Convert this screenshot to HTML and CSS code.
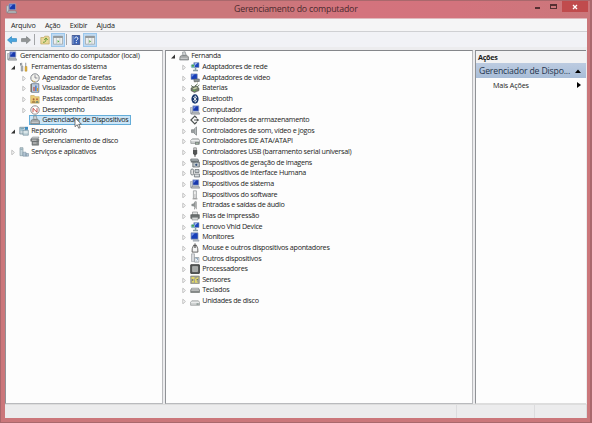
FILE: index.html
```html
<!DOCTYPE html>
<html lang="pt-BR">
<head>
<meta charset="utf-8">
<title>Gerenciamento do computador</title>
<link rel="stylesheet" href="styles.css">
</head>
<body>
<svg class="defs" width="0" height="0" aria-hidden="true">
  <symbol id="open" viewBox="0 0 6 6"><path d="M5 1.5v4H1z" fill="#333"/></symbol>
  <symbol id="closed" viewBox="0 0 6 6"><path d="M1.8 1.2 4.4 3.5 1.8 5.8z" fill="#fff" stroke="#b0b0b0" stroke-width=".8"/></symbol>
  <symbol id="pc" viewBox="0 0 10 10"><path d="M.5 2.5h2v6h-2z" fill="#c8ccd0" stroke="#808890" stroke-width=".5"/><path d="M2.8.8h6v5.4h-6z" fill="#1738ad" stroke="#a3afc2" stroke-width=".7"/><path d="m3.3 1.2 3 .1-2.7 3z" fill="#718ce0"/><path d="M2 7.2h7l.7 2H1.3z" fill="#b7bbbd" stroke="#727980" stroke-width=".5"/></symbol>
  <symbol id="tools" viewBox="0 0 10 10"><path d="M2.7.8v2.4l1 .8v5h-1.4V4L1.5 3V1" fill="none" stroke="#8b9298" stroke-width="1"/><path d="M6.7.8v4" stroke="#9fa4a8" stroke-width="1.1"/><path d="M6 4.5h2v4.7H6z" fill="#e4b53d" stroke="#a7812c" stroke-width=".4"/></symbol>
  <symbol id="clock" viewBox="0 0 10 10"><circle cx="5" cy="5" r="4.2" fill="#f2f2ed" stroke="#838890"/><path d="M5 2.2V5h2.4" fill="none" stroke="#667" stroke-width=".7"/><path d="M2 7.2a3.8 3.8 0 0 0 3 1.5" fill="none" stroke="#d7b35c" stroke-width=".9"/></symbol>
  <symbol id="events" viewBox="0 0 10 10"><path d="M1.5.7h7.3v8.6H1.5z" fill="#bccbdc" stroke="#64758a" stroke-width=".8"/><path d="M1 1v8" stroke="#71634f"/><path d="M3.4 4h1.2v4H3.4z" fill="#c64a40"/><path d="M5.3 2.5h1.2V8H5.3z" fill="#3666bb"/><path d="M7 5h1v3H7z" fill="#d8a829"/></symbol>
  <symbol id="folder" viewBox="0 0 10 10"><path d="M.7 1.5h3.5l1 1.2h4v6.5H.7z" fill="#edcd78" stroke="#b99a4c" stroke-width=".5"/><circle cx="3.6" cy="5.2" r="1" fill="#a5643c"/><path d="M1.8 9c0-3.2 3.6-3.2 3.6 0z" fill="#b18a4c"/><circle cx="7" cy="5.2" r="1" fill="#be6c43"/><path d="M5.6 9c0-3 3-3 3 0z" fill="#7a8e74"/></symbol>
  <symbol id="perf" viewBox="0 0 10 10"><circle cx="5" cy="5" r="4.2" fill="#fff" stroke="#767276" stroke-width=".8"/><path d="M3 7.2V3.3L7 7.2V3.2" fill="none" stroke="#bd413a" stroke-width=".9"/></symbol>
  <symbol id="device" viewBox="0 0 10 10"><path d="m3.5 1.2 2.6-.5 1 3.4-3.2.8z" fill="#d2d5d7" stroke="#777e82" stroke-width=".6"/><path d="m1 5.6 1.5-1.2h5.5L9.5 6v3H.7z" fill="#a2a6a7" stroke="#686d6f" stroke-width=".6"/><path d="M1.5 7.3h7" stroke="#e4e7e8" stroke-width=".7"/></symbol>
  <symbol id="storage" viewBox="0 0 10 10"><path d="M.8 1.3h5l1 1V8h-6z" fill="#ccd9df" stroke="#65808b" stroke-width=".7"/><path d="M1.5 2.5H5M1.5 4H4" stroke="#4b89a5" stroke-width=".6"/><path d="M6 .8h3v3H6z" fill="#3d8bc0"/><path d="M4 4.2h5.3v5H4z" fill="#c3d5db" stroke="#648392" stroke-width=".6"/><path d="M4.5 6h4.3" stroke="#fff" stroke-width=".8"/></symbol>
  <symbol id="diskmgr" viewBox="0 0 10 10"><path d="m1 3 1.5-2H9L8 3z" fill="#cdd0d1" stroke="#73787a" stroke-width=".5"/><path d="M.8 3h8v2.3h-8zM2 5.5h6.6v3.7H2z" fill="#858989" stroke="#555b5d" stroke-width=".5"/><path d="M2 4.2h4.5M3 7h3.5" stroke="#ddd" stroke-width=".8"/></symbol>
  <symbol id="services" viewBox="0 0 10 10"><path d="M1 .7h3v8H1z" fill="#c3d3db" stroke="#799099" stroke-width=".6"/><path d="M4 5.2h3v4H4zM7 6.5h2.5v2.7H7z" fill="#b3c5d4" stroke="#72899b" stroke-width=".5"/><path d="M1.5 2.3h2" stroke="#6b8b9b" stroke-width=".6"/></symbol>
  <symbol id="net" viewBox="0 0 10 10"><path d="M3.8.7h5.2v4.8H3.8z" fill="#1c46c0" stroke="#8293aa" stroke-width=".6"/><path d="m4.5 1 3 .1-2.5 2.5z" fill="#9db9ee"/><circle cx="2.9" cy="4.1" r="2.2" fill="#8ab9c6"/><path d="m1.5 3.4 1.7-1 1 1-1.2 1.8z" fill="#45a54d"/><path d="M4.8 6v1.8H3v1.4h5V7.8H6.3V6" fill="#8b9fa5"/></symbol>
  <symbol id="video" viewBox="0 0 10 10"><path d="M1 .9h6.3v5.6H1z" fill="#1740b9" stroke="#8999ae" stroke-width=".6"/><path d="m1.4 1.2 3.2.1-2.8 2.7z" fill="#7996e5"/><path d="M4 6h5.3v2.5H4z" fill="#8c9496" stroke="#596064" stroke-width=".6"/><path d="M5 8.5v1m2.3-1v1" stroke="#766c40" stroke-width=".7"/></symbol>
  <symbol id="monitor" viewBox="0 0 10 10"><path d="M1 .8h7v6.4H1z" fill="#1740b9" stroke="#8999ae" stroke-width=".7"/><path d="m1.4 1.2 3.4.1L1.6 4.6z" fill="#7996e5"/><path d="M3.5 7.4h3l2.5.5v1.3H3z" fill="#b1b9c2" stroke="#85909a" stroke-width=".4"/></symbol>
  <symbol id="battery" viewBox="0 0 10 10"><path d="m1 5 5-2.3 3 2.5v2.4L4.5 9.5 1 7.7z" fill="#737c6a" stroke="#444b40" stroke-width=".5"/><path d="m2.7 5.5 3.5-1.6 1.3 1-3.6 1.7z" fill="#c9d3ab"/><path d="m5 3 2.7-2.2M7 4l2.3-2M1 2.5l3 2" stroke="#53654a" stroke-width=".9"/><path d="M3.3 7.4h2.2" stroke="#55b04a"/></symbol>
  <symbol id="bt" viewBox="0 0 10 10"><ellipse cx="5" cy="5" rx="3.6" ry="4.7" fill="#17366b"/><path d="m3.2 3.2 3.6 3.4L5 8.2V1.8l1.8 1.6-3.6 3.4" fill="none" stroke="#fff" stroke-width=".8"/></symbol>
  <symbol id="ctrl" viewBox="0 0 10 10"><path d="M6.8 3 4.8 1 .9 5l3.9 4 2-2M4 5h4" fill="none" stroke="#4e5352" stroke-width="1.2"/><path d="m6.8 3.2 2.5 1.8-2.5 1.8z" fill="#4e5352"/></symbol>
  <symbol id="sound" viewBox="0 0 10 10"><path d="M1.5 3.7h2L6.5.9v8.3L3.5 6.6h-2z" fill="#999e9f" stroke="#6c7273" stroke-width=".6"/><path d="M5.5 2v6" stroke="#cfd3d3" stroke-width=".6"/></symbol>
  <symbol id="ide" viewBox="0 0 10 10"><path d="m.8 4.4 1.5-1.6h6.2l1 1.6v3H.8z" fill="#d0d3d3" stroke="#7b8080" stroke-width=".6"/><path d="M1 4.6h8.2" stroke="#fff" stroke-width=".7"/><path d="M5 5.8h4.4v3H5z" fill="#7e8583"/><path d="M6 7.3h2.2" stroke="#b9d8b4" stroke-width=".7"/></symbol>
  <symbol id="usb" viewBox="0 0 10 10"><path d="M3.7.8h2.7v2.5H3.7z" fill="#dadada" stroke="#666" stroke-width=".6"/><path d="M3 3h4.2v3.7L6 8H4.2L3 6.7z" fill="#525454"/><path d="M5 8v1.7" stroke="#555" stroke-width="1.2"/></symbol>
  <symbol id="imaging" viewBox="0 0 10 10"><path d="M.8 1h7l1 2h-8zM2.8 4h6.6v5H2.8z" fill="#b6bdbf" stroke="#5c6367" stroke-width=".7"/><path d="M.8 3h8v1.5h-8z" fill="#6d7476"/><circle cx="6.3" cy="6.8" r="1.5" fill="#345079" stroke="#e4e7e7" stroke-width=".6"/></symbol>
  <symbol id="hid" viewBox="0 0 10 10"><rect x=".8" y="1" width="2.8" height="6" rx="1.4" fill="#e5e5e5" stroke="#60686d" stroke-width=".8"/><path d="M5 1.5h4v3H5zM4.4 6h5.2v3H4.4z" fill="#c3cace" stroke="#646c71" stroke-width=".7"/><path d="M5 7.4h3.5" stroke="#fff" stroke-width=".5"/></symbol>
  <symbol id="software" viewBox="0 0 10 10"><path d="M3.4.8h3v7.4h-3z" fill="#eee" stroke="#8e9294" stroke-width=".7"/><path d="M2.6 8.2h4.8v1.2H2.6z" fill="#999"/><path d="M4.9 4v3" stroke="#aaa" stroke-width=".7"/></symbol>
  <symbol id="audio" viewBox="0 0 10 10"><path d="M1.8 4h1.6l2-2.8v6.6L3.4 6H1.8z" fill="#929797" stroke="#747979" stroke-width=".4"/><path d="M6.3 1.5v7.7M4.5 7.4v2" stroke="#8a8e8e" stroke-width=".8"/></symbol>
  <symbol id="printer" viewBox="0 0 10 10"><path d="M2.5 1h5v3h-5z" fill="#e1e3e3" stroke="#7b7e7e" stroke-width=".6"/><path d="M.8 3.7h8.5v3.7H.8z" fill="#6d7272" stroke="#4c5151" stroke-width=".6"/><path d="M2 6.3h6V9H2z" fill="#d5d8d8" stroke="#777c7c" stroke-width=".5"/></symbol>
  <symbol id="mouse" viewBox="0 0 10 10"><path d="M5 2.5V.3" stroke="#555" stroke-width=".9"/><path d="M3.6 2.2h2.8q2 3.5 1.5 6.9H2.1q-.5-3.4 1.5-6.9z" fill="#f3f3f3" stroke="#555" stroke-width=".9"/><path d="M5 2v3" stroke="#333" stroke-width="1.1"/></symbol>
  <symbol id="other" viewBox="0 0 10 10"><path d="M1.5.8h3v7.8h-3z" fill="#d8dadd" stroke="#91969b" stroke-width=".6"/><path d="M4.7 4.5h4.2v4.7H4.7z" fill="#f3f5f6" stroke="#777f84" stroke-width=".6"/><path d="M5.8 6c0-1.2 2-1.2 2 0 0 .9-1 .8-1 1.5M6.8 8.3v.5" stroke="#577fa2" stroke-width=".7" fill="none"/></symbol>
  <symbol id="cpu" viewBox="0 0 10 10"><path d="M.8.8h8.5v8.5H.8z" fill="#606362" stroke="#333635" stroke-width="1"/><path d="M2.6 2.6h4.9v4.9H2.6z" fill="#a4a8a6" stroke="#d1d3d1" stroke-width=".5"/></symbol>
  <symbol id="sensor" viewBox="0 0 10 10"><path d="M.7 1h8.6v7.5H.7z" fill="#a2a290" stroke="#7b7e70" stroke-width=".6"/><path d="M1.5 2h3v2.3h-3zM5 4l3.2-2v2L6.4 5.5 8 7.7H5zM2 5.5h2v2H2z" fill="#e2d765"/><path d="M2 5h1M6.7 4.5h1" stroke="#525854"/></symbol>
  <symbol id="keyboard" viewBox="0 0 10 10"><path d="m.7 5 1-1.8h6.8l1 1.8v2.5H.7z" fill="#858988" stroke="#666b6a" stroke-width=".6"/><path d="M1.7 3.9h6.8M1.2 5.2h7.8" stroke="#e3e5e5" stroke-width=".8"/></symbol>
  <symbol id="drive" viewBox="0 0 10 10"><path d="m.6 6.3 1.2-1.5h6.6l1.1 1.5v3H.6z" fill="#d0d3d3" stroke="#858989" stroke-width=".6"/><path d="M1 6.3h8.2" stroke="#fff" stroke-width=".7"/><path d="M6.5 8h2.2" stroke="#5c6f66" stroke-width=".9"/></symbol>
  <symbol id="pane" viewBox="0 0 10 10"><path d="M.5 1.2h9v8h-9z" fill="#eef0ee" stroke="#9aa0a2" stroke-width=".7"/><path d="M.3 2h9.4" stroke="#8f9496" stroke-width="1.8"/><path d="M3.4 3v6M6.9 3v6" stroke="#b2b7b8" stroke-width=".6"/></symbol>
</svg>
<div class="window">
  <header class="titlebar">
    <svg class="app-icon"><use href="#pc"/></svg>
    <h1>Gerenciamento do computador</h1>
    <div class="controls">
      <span class="min"></span><span class="max"></span>
      <span class="close"><svg viewBox="0 0 6 6"><path d="m1 1 4 4m0-4L1 5" stroke="#fff" stroke-width="1.3"/></svg></span>
    </div>
  </header>
  <main class="client">
    <nav class="menu"><span>Arquivo</span><span>Ação</span><span>Exibir</span><span>Ajuda</span></nav>
    <div class="toolbar">
      <svg class="arrow" viewBox="0 0 10 8"><path d="M.5 4 4.5.6v2h5v3h-5v2z" fill="#48a4df" stroke="#257fb9" stroke-width=".6"/></svg>
      <svg class="arrow" viewBox="0 0 10 8"><path d="m9.5 4-4-3.4v2h-5v3h5v2z" fill="#929596" stroke="#727778" stroke-width=".6"/></svg>
      <i class="sep"></i>
      <svg class="tool up" viewBox="0 0 10 10"><path d="M.8 2.5h3l1-1.3h3.6l.8 1V9H.8z" fill="#ead99a" stroke="#b69c50" stroke-width=".6"/><path d="M3 7.3c2.5 0 3-1 3-3.5M4.2 4.9 6 2.9l1.7 2" fill="none" stroke="#6b9e3d" stroke-width="1"/></svg>
      <span class="tool-on"><svg viewBox="0 0 10 10"><use href="#pane"/><path d="m4.6 5 1.8 1.4-1.8 1.4z" fill="#4fa84a"/></svg></span>
      <i class="sep"></i>
      <svg class="tool help" viewBox="0 0 10 10"><path d="M1.2.4h7.5v9.2H1.2z" fill="#3e64b5" stroke="#293e7d" stroke-width=".7"/><path d="M2 1v8" stroke="#9caed3" stroke-width=".8"/><path d="M3.8 3.5c0-2 3-2 3 0 0 1.3-1.5 1.2-1.5 2.6M5.3 7v1.2" fill="none" stroke="#fff" stroke-width="1"/></svg>
      <span class="tool-on"><svg viewBox="0 0 10 10"><use href="#pane"/><path d="m4.3 5 1.8 1.4-1.8 1.4z" fill="#4fa84a"/></svg></span>
    </div>
    <div class="panels">
      <section class="panel tree">
        <div class="row root"><svg class="ico"><use href="#pc"/></svg><span>Gerenciamento do computador (local)</span></div>
        <div class="row l1"><svg class="tw"><use href="#open"/></svg><svg class="ico"><use href="#tools"/></svg><span>Ferramentas do sistema</span></div>
        <div class="row l2"><svg class="tw"><use href="#closed"/></svg><svg class="ico"><use href="#clock"/></svg><span>Agendador de Tarefas</span></div>
        <div class="row l2"><svg class="tw"><use href="#closed"/></svg><svg class="ico"><use href="#events"/></svg><span>Visualizador de Eventos</span></div>
        <div class="row l2"><svg class="tw"><use href="#closed"/></svg><svg class="ico"><use href="#folder"/></svg><span>Pastas compartilhadas</span></div>
        <div class="row l2"><svg class="tw"><use href="#closed"/></svg><svg class="ico"><use href="#perf"/></svg><span>Desempenho</span></div>
        <div class="row l2 selected"><svg class="ico"><use href="#device"/></svg><span>Gerenciador de Dispositivos</span>
          <svg class="cursor" viewBox="0 0 8 12"><path d="M1 .7v9l2.2-2 1.5 3.5 1.5-.7-1.5-3.3h2.7z" fill="#fff" stroke="#444" stroke-width=".7"/></svg></div>
        <div class="row l1"><svg class="tw"><use href="#open"/></svg><svg class="ico"><use href="#storage"/></svg><span>Repositório</span></div>
        <div class="row l2 leaf"><svg class="ico"><use href="#diskmgr"/></svg><span>Gerenciamento de disco</span></div>
        <div class="row l1"><svg class="tw"><use href="#closed"/></svg><svg class="ico"><use href="#services"/></svg><span>Serviços e aplicativos</span></div>
      </section>
      <section class="panel devices">
        <div class="row l1"><svg class="tw"><use href="#open"/></svg><svg class="ico"><use href="#device"/></svg><span>Fernanda</span></div>
        <div class="row l2"><svg class="tw"><use href="#closed"/></svg><svg class="ico"><use href="#net"/></svg><span>Adaptadores de rede</span></div>
        <div class="row l2"><svg class="tw"><use href="#closed"/></svg><svg class="ico"><use href="#video"/></svg><span>Adaptadores de vídeo</span></div>
        <div class="row l2"><svg class="tw"><use href="#closed"/></svg><svg class="ico"><use href="#battery"/></svg><span>Baterias</span></div>
        <div class="row l2"><svg class="tw"><use href="#closed"/></svg><svg class="ico"><use href="#bt"/></svg><span>Bluetooth</span></div>
        <div class="row l2"><svg class="tw"><use href="#closed"/></svg><svg class="ico"><use href="#pc"/></svg><span>Computador</span></div>
        <div class="row l2"><svg class="tw"><use href="#closed"/></svg><svg class="ico"><use href="#ctrl"/></svg><span>Controladores de armazenamento</span></div>
        <div class="row l2"><svg class="tw"><use href="#closed"/></svg><svg class="ico"><use href="#sound"/></svg><span>Controladores de som, vídeo e jogos</span></div>
        <div class="row l2"><svg class="tw"><use href="#closed"/></svg><svg class="ico"><use href="#ide"/></svg><span>Controladores IDE ATA/ATAPI</span></div>
        <div class="row l2"><svg class="tw"><use href="#closed"/></svg><svg class="ico"><use href="#usb"/></svg><span>Controladores USB (barramento serial universal)</span></div>
        <div class="row l2"><svg class="tw"><use href="#closed"/></svg><svg class="ico"><use href="#imaging"/></svg><span>Dispositivos de geração de imagens</span></div>
        <div class="row l2"><svg class="tw"><use href="#closed"/></svg><svg class="ico"><use href="#hid"/></svg><span>Dispositivos de Interface Humana</span></div>
        <div class="row l2"><svg class="tw"><use href="#closed"/></svg><svg class="ico"><use href="#pc"/></svg><span>Dispositivos de sistema</span></div>
        <div class="row l2"><svg class="tw"><use href="#closed"/></svg><svg class="ico"><use href="#software"/></svg><span>Dispositivos do software</span></div>
        <div class="row l2"><svg class="tw"><use href="#closed"/></svg><svg class="ico"><use href="#audio"/></svg><span>Entradas e saídas de áudio</span></div>
        <div class="row l2"><svg class="tw"><use href="#closed"/></svg><svg class="ico"><use href="#printer"/></svg><span>Filas de impressão</span></div>
        <div class="row l2"><svg class="tw"><use href="#closed"/></svg><svg class="ico"><use href="#net"/></svg><span>Lenovo Vhid Device</span></div>
        <div class="row l2"><svg class="tw"><use href="#closed"/></svg><svg class="ico"><use href="#monitor"/></svg><span>Monitores</span></div>
        <div class="row l2"><svg class="tw"><use href="#closed"/></svg><svg class="ico"><use href="#mouse"/></svg><span>Mouse e outros dispositivos apontadores</span></div>
        <div class="row l2"><svg class="tw"><use href="#closed"/></svg><svg class="ico"><use href="#other"/></svg><span>Outros dispositivos</span></div>
        <div class="row l2"><svg class="tw"><use href="#closed"/></svg><svg class="ico"><use href="#cpu"/></svg><span>Processadores</span></div>
        <div class="row l2"><svg class="tw"><use href="#closed"/></svg><svg class="ico"><use href="#sensor"/></svg><span>Sensores</span></div>
        <div class="row l2"><svg class="tw"><use href="#closed"/></svg><svg class="ico"><use href="#keyboard"/></svg><span>Teclados</span></div>
        <div class="row l2"><svg class="tw"><use href="#closed"/></svg><svg class="ico"><use href="#drive"/></svg><span>Unidades de disco</span></div>
      </section>
      <aside class="panel actions">
        <div class="actions-title">Ações</div>
        <div class="group"><span>Gerenciador de Dispo...</span><svg viewBox="0 0 6 4"><path d="M0 4 3 .5 6 4z"/></svg></div>
        <div class="more"><span>Mais Ações</span><svg viewBox="0 0 4 6"><path d="m0 0 4 3-4 3z"/></svg></div>
      </aside>
    </div>
    <footer class="status"><span></span><span></span><span></span></footer>
  </main>
</div>
</body>
</html>
```
FILE: styles.css
```css
* { box-sizing: border-box; }
body { margin: 0; font: 7.2px/10px "Open Sans", "Noto Sans", sans-serif; color: #1c1c1c; overflow: hidden; }
.defs { position: absolute; }
svg { display: block; flex: none; }
.window {
  width: 592px; height: 423px; padding: 0 3px 4px 4px;
  display: flex; flex-direction: column;
  background: #cb777b; border: solid #a9686c; border-width: 1px 2px 1px 1px;
}
.titlebar { height: 17px; display: flex; align-items: flex-start; margin-left: -4px; margin-right: -1px; background: linear-gradient(90deg, #cb777b 45%, #d4737d 60%, #d3737d 78%, #cb777b); }
.app-icon { width: 11px; height: 11px; margin: 2px 0 0 5px; }
.titlebar h1 { flex: 1; margin: 2px 0 0 217px; font-size: 8.8px; line-height: 12px; font-weight: 400; letter-spacing: -.22px; color: #4b2a2e; white-space: nowrap; }
.controls { display: flex; height: 11px; }
.min { width: 5px; height: 2px; margin: 6px 10px 0 0; background: #552f32; }
.max { width: 7px; height: 5px; margin: 3px 5px 0 0; border: 1px solid #552f32; border-top-width: 2px; }
.close { width: 26px; height: 11px; display: grid; place-items: center; background: #c04b4d; }
.close svg { width: 6px; height: 6px; }
.client { flex: 1; min-height: 0; display: flex; flex-direction: column; background: #ececee; border-top: 1px solid #dfb9bd; }
.menu { height: 13px; display: flex; gap: 9.3px; padding: 1px 0 0 6px; background: #f5f5f6; border-bottom: 1px solid #cfd0d3; letter-spacing: -.2px; }
.toolbar { height: 15px; display: flex; align-items: center; padding-left: 2px; background: #f1f2f6; }
.arrow { width: 10px; height: 8px; margin-right: 3.5px; }
.sep { width: 1px; height: 11px; background: #a3a5a8; }
.tool { width: 10px; height: 10px; }
.up { margin: 0 1.5px 0 4.5px; }
.help { margin: 0 2px 0 4px; }
.tool-on { width: 14px; height: 14px; display: grid; place-items: center; background: #c0daf3; border: 1px solid #9bc7ec; }
.tool-on + .sep { margin-left: 1px; }
.tool-on svg { width: 10px; height: 10px; }
.panels { flex: 1; min-height: 0; display: grid; grid-template-columns: 158px 308px 1fr; gap: 2px; padding: 3px 1px 0 0; }
.panel { background: #fdfdfd; border: 1px solid #b9babd; border-top-color: #85878b; border-left-color: #909296; overflow: hidden; }
.row { height: 10.65px; display: flex; align-items: center; white-space: nowrap; line-height: 10px; letter-spacing: -.28px; }
.row > span { padding-bottom: 2px; }
.row > .tw { width: 6px; height: 6px; margin-right: 3px; }
.row > .ico { width: 10px; height: 10px; margin-right: 2.2px; }
.tree > .row { letter-spacing: -.25px; }
.tree > .root { padding-left: 1px; letter-spacing: -.22px; }
.root > .ico { margin-right: 3px; }
.l1 { padding-left: 4px; }
.l2 { padding-left: 15px; }
.leaf { padding-left: 24px; }
.tree > .selected { position: relative; width: 102px; margin-left: 23px; padding-left: 1px; background: #cbe5f7; border: 1px solid #64add9; letter-spacing: -.28px; }
.selected > .ico { margin-left: -1px; }
.selected > .cursor { position: absolute; left: 43.5px; top: 1px; width: 8px; height: 12px; }
.tree { overflow: visible; }
.actions { border-bottom-color: #ddd; border-right: 0; }
.actions-title { height: 12px; padding: 1px 0 0 2px; font-weight: 700; letter-spacing: -.28px; background: #f2f2f3; }
.group { height: 15px; display: flex; align-items: center; justify-content: space-between; padding: 0 5px 0 3px; font-size: 8.7px; letter-spacing: -.17px; color: #25354d; background: linear-gradient(#bccbe0, #a8bdd8); white-space: nowrap; }
.group svg { width: 6px; height: 4px; }
.more { height: 14px; display: flex; align-items: center; justify-content: space-between; padding: 0 5px 0 17px; letter-spacing: -.15px; }
.more svg { width: 4px; height: 6px; }
.status { height: 14px; display: grid; grid-template-columns: 1fr 78px 52px; background: #ececed; border-top: 1px solid #ddd; }
.status span { border-right: 1px solid #dcdcde; }
```
